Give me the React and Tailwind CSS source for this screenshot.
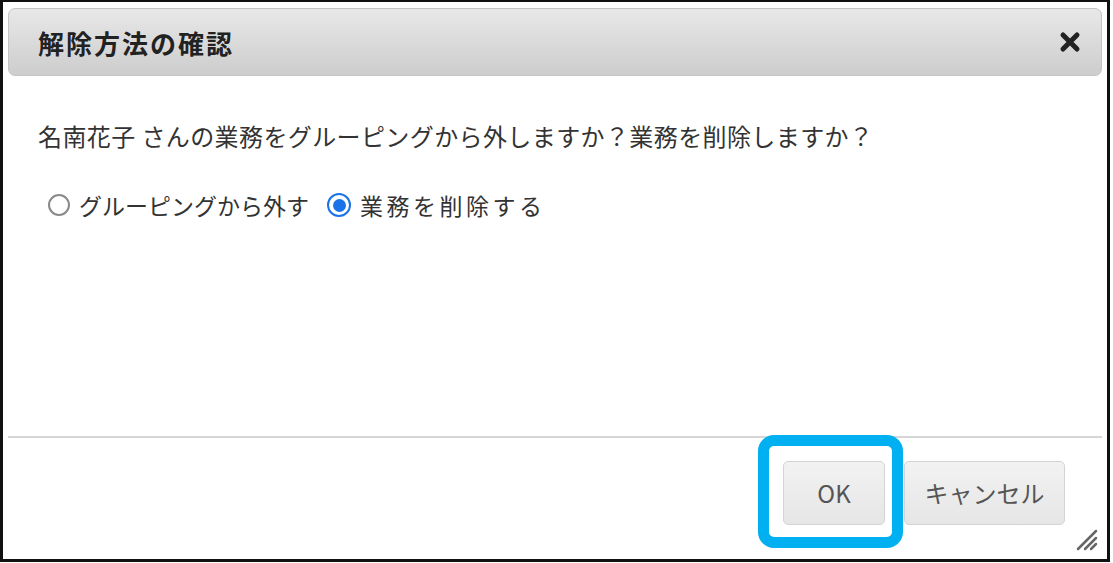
import React, { useState } from 'react';

const font = { fontFamily: '"Noto Sans CJK JP", "Noto Sans", sans-serif' };

function Radio({ checked, label, onClick, wide }) {
  return (
    <label onClick={onClick} className="flex items-center gap-[9px] cursor-pointer">
      {checked ? (
        <span className="w-[24px] h-[24px] rounded-full border-2 border-[#1a73e8] flex items-center justify-center bg-white">
          <span className="w-[13px] h-[13px] rounded-full bg-[#1a73e8]" />
        </span>
      ) : (
        <span className="w-[22px] h-[22px] rounded-full border-2 border-[#8a8a8a] bg-white" />
      )}
      <span className={wide ? 'tracking-[3.5px]' : ''}>{label}</span>
    </label>
  );
}

export default function App() {
  const [mode, setMode] = useState('delete');

  return (
    <div className="w-[1113px] h-[563px] bg-white" style={font}>
      <div className="w-[1110px] h-[562px] border-t-2 border-l-[3px] border-r-[3px] border-b-[3px] border-[#111] flex flex-col pt-[6px] px-[5px] pb-[5px] relative">
        <div className="h-[68px] rounded-[7px] border border-[#c4c4c4] bg-gradient-to-b from-[#e8e8e8] to-[#cdcdcd] flex items-center justify-between pl-[29px] pr-[20px]">
          <span className="text-[26px] font-bold text-[#222] tracking-[2px]">解除方法の確認</span>
          <svg width="22" height="22" viewBox="0 0 22 22">
            <path d="M4 4 L18 18 M18 4 L4 18" stroke="#222" strokeWidth="5" strokeLinecap="round" />
          </svg>
        </div>

        <div className="flex-1 flex flex-col pl-[30px] text-[#333]">
          <p className="mt-[44px] text-[24px] leading-[32px] tracking-[0.4px]">
            名南花子 さんの業務をグルーピングから外しますか？業務を削除しますか？
          </p>
          <div className="mt-[36px] flex items-center gap-[18px] text-[23px] pl-[10px]">
            <Radio checked={mode === 'ungroup'} label="グルーピングから外す" onClick={() => setMode('ungroup')} />
            <Radio checked={mode === 'delete'} label="業務を削除する" wide onClick={() => setMode('delete')} />
          </div>
        </div>

        <div className="h-[2px] bg-[#d6d6d6]" />

        <div className="h-[116px] flex items-start justify-end pt-[23px] pr-[37px] gap-[19px] relative">
          <div className="relative">
            <button className="w-[102px] h-[64px] rounded-[5px] border border-[#d3d3d3] bg-gradient-to-b from-[#f2f2f2] to-[#e6e6e6] text-[24px] text-[#555]">
              OK
            </button>
            <div className="absolute -left-[25px] -top-[26px] w-[145px] h-[113px] rounded-[16px] border-[11px] border-[#00b0f0] pointer-events-none" />
          </div>
          <button className="w-[161px] h-[64px] rounded-[5px] border border-[#d3d3d3] bg-gradient-to-b from-[#f2f2f2] to-[#e6e6e6] text-[24px] text-[#555]">
            キャンセル
          </button>
          <svg className="absolute right-[4px] bottom-[3px]" width="24" height="24" viewBox="0 0 24 24">
            <path d="M22 4 L4 22 M22 11 L11 22 M22 17 L17 22" stroke="#666" strokeWidth="2.5" strokeLinecap="round" />
          </svg>
        </div>
      </div>
    </div>
  );
}
